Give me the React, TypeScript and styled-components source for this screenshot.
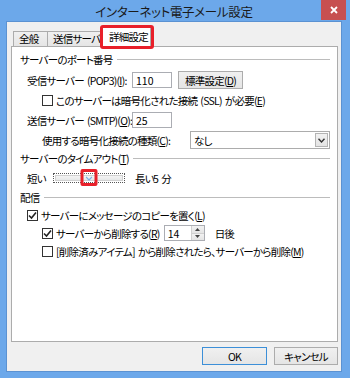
import styled, { createGlobalStyle } from "styled-components";

const GlobalStyle = createGlobalStyle`
    html, body {
        margin: 0;
        padding: 0;
    }
    body {
        font-family: "Noto Sans CJK JP", "Noto Sans", sans-serif;
        font-size: 10.5px;
        letter-spacing: -0.75px;
        word-spacing: 1.5px;
        font-feature-settings: "palt";
        color: #000;
    }
`;

const Window = styled.div`
    width: 350px;
    height: 378px;
    box-sizing: border-box;
    background: #6ca8ea;
    padding: 0 8px 6px 6px;
    display: flex;
    flex-direction: column;
`;

const TitleBar = styled.div`
    height: 21px;
    display: grid;
    grid-template-columns: 1fr auto 1fr;
    align-items: center;
`;

const Title = styled.div`
    grid-column: 2;
    font-size: 12.5px;
    letter-spacing: -0.3px;
    color: #1a1a1a;
    padding-top: 2px;
`;

const CloseButton = styled.div`
    grid-column: 3;
    justify-self: end;
    align-self: start;
    margin-right: -4px;
    width: 25px;
    height: 20px;
    background: #c75050;
    display: flex;
    align-items: center;
    justify-content: center;
`;

const Client = styled.div`
    flex: 1;
    background: #f0f0f0;
    border: 1px solid #5b92d2;
    padding: 5px 3px 0 4px;
    display: flex;
    flex-direction: column;
`;

const TabRow = styled.div`
    display: flex;
    align-items: flex-end;
    padding-left: 2px;
    height: 20px;
    position: relative;
    z-index: 1;
    margin-bottom: -1px;
`;

const Tab = styled.div<{ $active?: boolean; $w: number }>`
    position: relative;
    box-sizing: border-box;
    width: ${({ $w }) => $w}px;
    height: ${({ $active }) => ($active ? "20px" : "16px")};
    padding: ${({ $active }) => ($active ? "0 0 3px 6px" : "0 0 1px 5px")};
    margin-left: ${({ $active }) => ($active ? "-2px" : "-1px")};
    z-index: ${({ $active }) => ($active ? 2 : 1)};
    border: 1px solid #acacac;
    border-bottom: ${({ $active }) => ($active ? "none" : "1px solid #acacac")};
    background: ${({ $active }) =>
        $active ? "#fff" : "linear-gradient(#f0f0f0, #e5e5e5)"};
    display: flex;
    align-items: center;
    white-space: nowrap;
    &:first-child {
        margin-left: 0;
    }
`;

const Highlight = styled.div`
    position: absolute;
    top: -3px;
    left: -3px;
    right: -4px;
    bottom: -2px;
    border: 3px solid #e8202a;
    border-radius: 3px;
    pointer-events: none;
`;

const Panel = styled.div`
    box-sizing: border-box;
    height: 296px;
    background: #fff;
    border: 1px solid #acacac;
    padding: 0 7px 0 8px;
    display: flex;
    flex-direction: column;
`;

const GroupLabel = styled.div<{ $mt: number }>`
    height: 16px;
    margin-top: ${({ $mt }) => $mt}px;
    display: flex;
    align-items: center;
    gap: 4px;
    &::after {
        content: "";
        flex: 1;
        height: 1px;
        background: #bcbcbc;
    }
`;

const Row = styled.div<{ $mt: number; $indent: number; $h?: number }>`
    height: ${({ $h }) => $h ?? 18}px;
    margin-top: ${({ $mt }) => $mt}px;
    padding-left: ${({ $indent }) => $indent}px;
    display: flex;
    align-items: center;
    white-space: nowrap;
`;

const FieldLabel = styled.span<{ $w: number; $ml?: number }>`
    width: ${({ $w }) => $w}px;
    margin-left: ${({ $ml }) => $ml ?? 0}px;
    flex-shrink: 0;
`;

const TextBox = styled.div<{ $w: number; $ml?: number }>`
    box-sizing: border-box;
    width: ${({ $w }) => $w}px;
    height: 16px;
    margin-left: ${({ $ml }) => $ml ?? 0}px;
    border: 1px solid #abadb3;
    background: #fff;
    padding-left: 3px;
    display: flex;
    align-items: center;
    position: relative;
    letter-spacing: 0;
    flex-shrink: 0;
`;

const Button = styled.div<{ $w: number; $default?: boolean; $ml?: number }>`
    box-sizing: border-box;
    width: ${({ $w }) => $w}px;
    height: 18px;
    margin-left: ${({ $ml }) => $ml ?? 0}px;
    border: 1px solid ${({ $default }) => ($default ? "#3c8fd8" : "#acacac")};
    background: linear-gradient(#f0f0f0, #e5e5e5);
    display: flex;
    align-items: center;
    justify-content: center;
`;

const CheckBox = styled.span`
    box-sizing: border-box;
    width: 11px;
    height: 11px;
    border: 1px solid #333;
    background: #fff;
    margin-right: 3px;
    flex-shrink: 0;
    display: flex;
    align-items: center;
    justify-content: center;
`;

const CheckText = styled.span`
    display: flex;
    align-items: center;
    flex-shrink: 0;
`;

const Select = styled.div`
    box-sizing: border-box;
    width: 140px;
    height: 18px;
    border: 1px solid #acacac;
    background: #fff;
    display: flex;
    align-items: center;
    padding: 0 1px 0 3px;
`;

const SelectValue = styled.span`
    flex: 1;
`;

const DropArrow = styled.span`
    box-sizing: border-box;
    width: 13px;
    height: 14px;
    border: 1px solid #b4b4b4;
    background: linear-gradient(#f2f2f2, #e4e4e4);
    display: flex;
    align-items: center;
    justify-content: center;
`;

const SliderBox = styled.div`
    position: relative;
    box-sizing: border-box;
    width: 72px;
    height: 10px;
    border: 1px dotted #555;
    padding: 1px;
    flex-shrink: 0;
`;

const Track = styled.div`
    box-sizing: border-box;
    height: 100%;
    border: 1px solid #d0d0d0;
    background: linear-gradient(#f4f4f4, #e6e8e8);
`;

const Thumb = styled.div`
    position: absolute;
    top: 2px;
    transform: translateX(-50%);
    width: 7px;
    height: 6px;
    display: flex;
`;

const ThumbMark = styled.div`
    position: absolute;
    top: -5px;
    width: 11px;
    height: 11px;
    transform: translateX(-50%);
    border: 3px solid #e8202a;
    border-radius: 2px;
`;

const Spin = styled.div`
    position: absolute;
    right: 0;
    top: 0;
    bottom: 0;
    width: 12px;
    display: flex;
    flex-direction: column;
    border-left: 1px solid #d0d0d0;
`;

const SpinHalf = styled.span`
    flex: 1;
    background: linear-gradient(#f2f2f2, #e4e4e4);
    display: flex;
    align-items: center;
    justify-content: center;
    &:first-child {
        border-bottom: 1px solid #d0d0d0;
    }
`;

const ButtonBar = styled.div`
    display: flex;
    justify-content: flex-end;
    gap: 7px;
    margin-top: 5px;
`;

const Check = () => (
    <svg width="9" height="9" viewBox="0 0 9 9">
        <path d="M1 4.5 L3.5 7 L8 1.5" fill="none" stroke="#222" strokeWidth="1.6" />
    </svg>
);

const CheckItem = ({
    checked,
    children,
}: {
    checked?: boolean;
    children: React.ReactNode;
}) => (
    <CheckText>
        <CheckBox>{checked && <Check />}</CheckBox>
        <span>{children}</span>
    </CheckText>
);

const Chevron = ({ color, width }: { color: string; width: number }) => (
    <svg width="7" height="5" viewBox="0 0 7 5">
        <path d="M0.5 0.8 L3.5 4 L6.5 0.8" fill="none" stroke={color} strokeWidth={width} />
    </svg>
);

export default function App() {
    const timeout = 0.5;
    return (
        <>
            <GlobalStyle />
            <Window>
                <TitleBar>
                    <Title>インターネット電子メール設定</Title>
                    <CloseButton>
                        <svg width="8" height="8" viewBox="0 0 8 8">
                            <path d="M1 1 L7 7 M7 1 L1 7" stroke="#fff" strokeWidth="1.8" />
                        </svg>
                    </CloseButton>
                </TitleBar>
                <Client>
                    <TabRow>
                        <Tab $w={35}>全般</Tab>
                        <Tab $w={57}>送信サーバー</Tab>
                        <Tab $w={49} $active>
                            詳細設定
                            <Highlight />
                        </Tab>
                    </TabRow>
                    <Panel>
                        <GroupLabel $mt={4}>サーバーのポート番号</GroupLabel>
                        <Row $mt={4} $indent={7}>
                            <FieldLabel $w={105}>
                                受信サーバー (POP3)(<u>I</u>):
                            </FieldLabel>
                            <TextBox $w={40}>110</TextBox>
                            <Button $w={65} $ml={6}>
                                標準設定(<u>D</u>)
                            </Button>
                        </Row>
                        <Row $mt={4} $indent={22} $h={14}>
                            <CheckItem>
                                このサーバーは暗号化された接続 (SSL) が必要(<u>E</u>)
                            </CheckItem>
                        </Row>
                        <Row $mt={4} $indent={7}>
                            <FieldLabel $w={105}>
                                送信サーバー (SMTP)(<u>O</u>):
                            </FieldLabel>
                            <TextBox $w={40}>25</TextBox>
                        </Row>
                        <Row $mt={2} $indent={22}>
                            <FieldLabel $w={148}>
                                使用する暗号化接続の種類(<u>C</u>):
                            </FieldLabel>
                            <Select>
                                <SelectValue>なし</SelectValue>
                                <DropArrow>
                                    <Chevron color="#333" width={1.4} />
                                </DropArrow>
                            </Select>
                        </Row>
                        <GroupLabel $mt={1}>
                            <span>
                                サーバーのタイムアウト(<u>T</u>)
                            </span>
                        </GroupLabel>
                        <Row $mt={4} $indent={7} $h={16}>
                            <FieldLabel $w={26}>短い</FieldLabel>
                            <SliderBox>
                                <Track />
                                <Thumb style={{ left: `${timeout * 100}%` }}>
                                    <Chevron color="#7fb2e5" width={1.2} />
                                </Thumb>
                                <ThumbMark style={{ left: `${timeout * 100}%` }} />
                            </SliderBox>
                            <FieldLabel $w={18} $ml={10}>
                                長い
                            </FieldLabel>
                            <span>5 分</span>
                        </Row>
                        <GroupLabel $mt={3}>配信</GroupLabel>
                        <Row $mt={3} $indent={7} $h={14}>
                            <CheckItem checked>
                                サーバーにメッセージのコピーを置く(<u>L</u>)
                            </CheckItem>
                        </Row>
                        <Row $mt={2} $indent={22}>
                            <CheckItem checked>
                                サーバーから削除する(<u>R</u>)
                            </CheckItem>
                            <TextBox $w={41} $ml={4}>
                                14
                                <Spin>
                                    <SpinHalf>
                                        <svg width="5" height="3" viewBox="0 0 5 3">
                                            <path d="M0 3 L2.5 0 L5 3 Z" fill="#444" />
                                        </svg>
                                    </SpinHalf>
                                    <SpinHalf>
                                        <svg width="5" height="3" viewBox="0 0 5 3">
                                            <path d="M0 0 L2.5 3 L5 0 Z" fill="#444" />
                                        </svg>
                                    </SpinHalf>
                                </Spin>
                            </TextBox>
                            <FieldLabel $w={30} $ml={10}>
                                日後
                            </FieldLabel>
                        </Row>
                        <Row $mt={2} $indent={22} $h={14}>
                            <CheckItem>
                                [削除済みアイテム] から削除されたら、サーバーから削除(<u>M</u>)
                            </CheckItem>
                        </Row>
                    </Panel>
                    <ButtonBar>
                        <Button $w={65} $default>
                            OK
                        </Button>
                        <Button $w={64}>キャンセル</Button>
                    </ButtonBar>
                </Client>
            </Window>
        </>
    );
}
